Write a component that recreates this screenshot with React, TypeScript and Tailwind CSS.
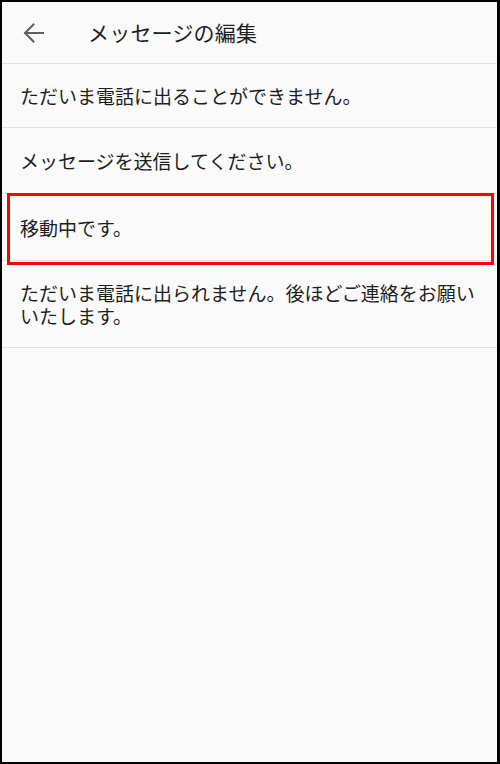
const messages = [
  { text: "ただいま電話に出ることができません。", h: "h-[64px]" },
  { text: "メッセージを送信してください。", h: "h-[66px]" },
  { text: "移動中です。", h: "h-[67px]", marked: true },
  { text: "ただいま電話に出られません。後ほどご連絡をお願いいたします。", h: "h-[87px]" },
];

export default function App() {
  return (
    <div
      className="h-[764px] w-[500px] box-border border-t-2 border-l-2 border-r-[3px] border-b-2 border-black bg-[#fafafa] text-[#1e1e1e]"
      style={{ fontFamily: '"Noto Sans CJK JP", "Noto Sans", sans-serif' }}
    >
      <header className="flex h-[62px] items-center border-b border-[#e2e2e2]">
        <button className="ml-[20px] flex h-[24px] w-[24px] items-center justify-center text-[#5f5f5f]">
          <svg width="24" height="24" viewBox="0 0 24 24" fill="none" stroke="currentColor" strokeWidth="2" strokeLinecap="square">
            <path d="M3 12h18M11.5 3.5 3 12l8.5 8.5" />
          </svg>
        </button>
        <h1 className="ml-[42px] text-[21px] leading-none tracking-[0.2px]">メッセージの編集</h1>
      </header>
      <ul>
        {messages.map((m) => (
          <li
            key={m.text}
            className={`relative flex items-center border-b border-[#e2e2e2] pl-[18px] pr-[18px] text-[19px] leading-[23px] ${m.h}`}
          >
            <span>{m.text}</span>
            {m.marked && (
              <span className="pointer-events-none absolute -top-[1px] -bottom-[5px] left-[5px] right-[3px] border-[3px] border-[#ff0000]" />
            )}
          </li>
        ))}
      </ul>
    </div>
  );
}
